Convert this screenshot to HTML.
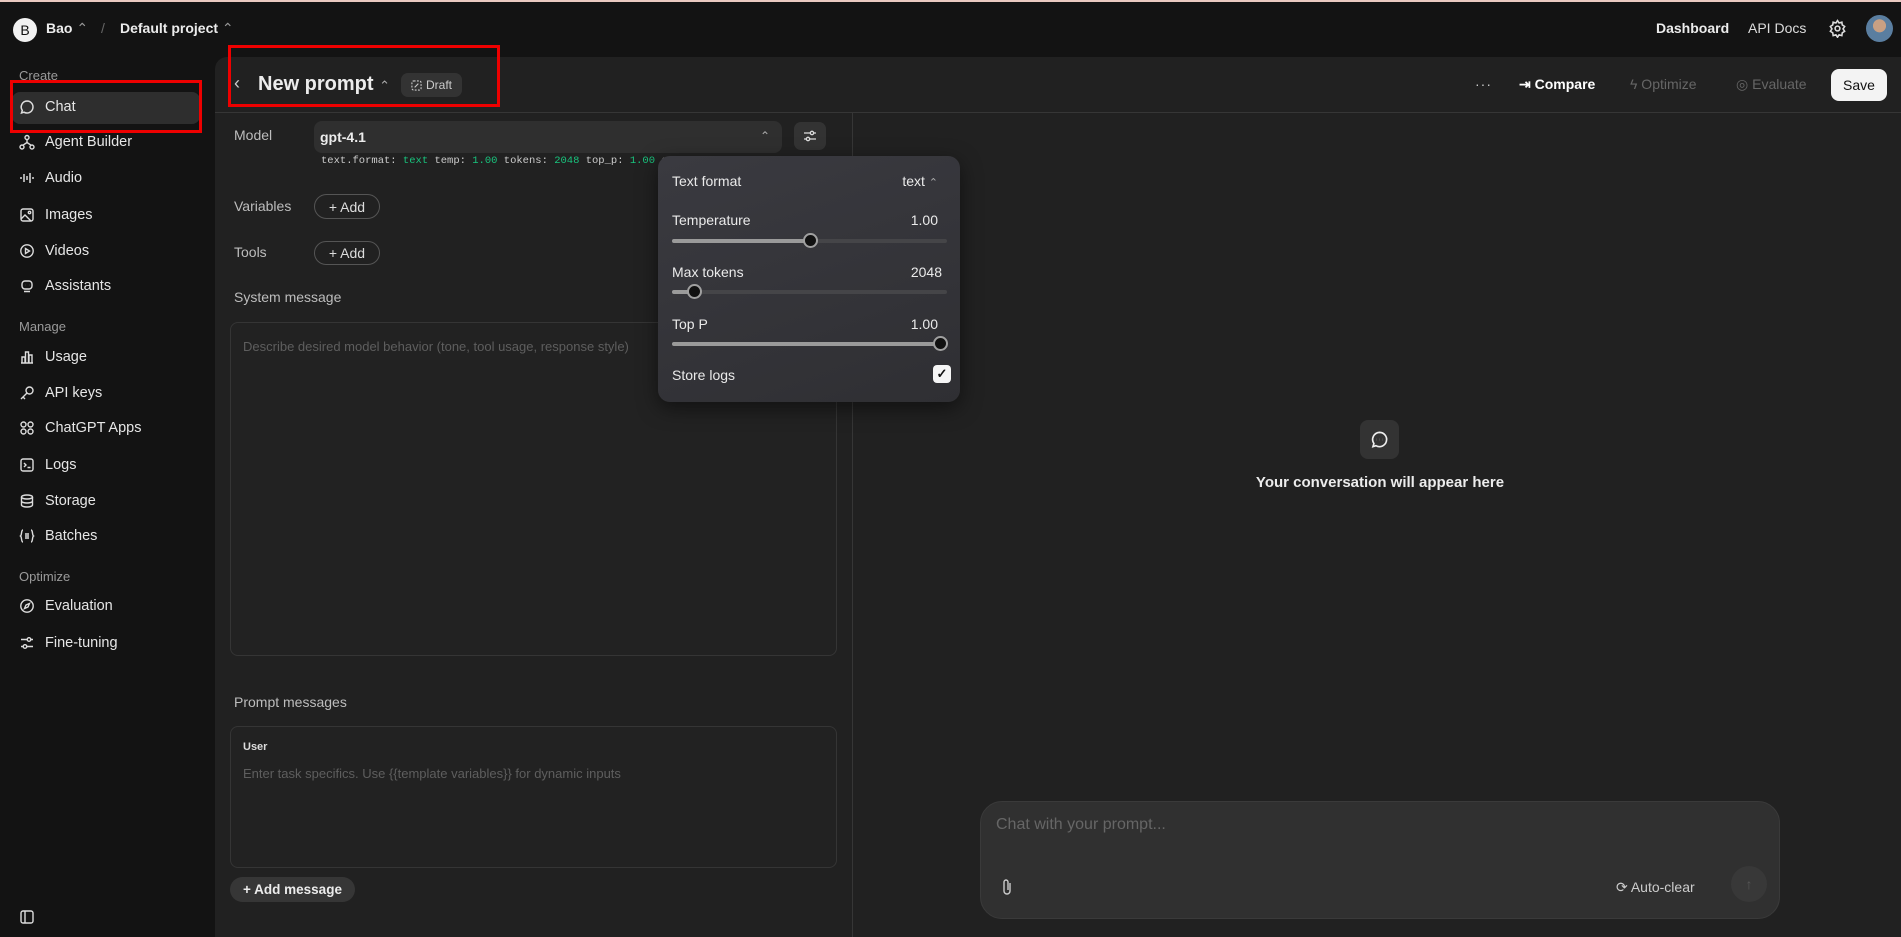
<!DOCTYPE html>
<html><head><meta charset="utf-8"><style>
*{box-sizing:border-box;margin:0;padding:0}
body{width:1901px;height:937px;overflow:hidden;background:#131313;font-family:"Liberation Sans",sans-serif;color:#ececec;position:relative;font-size:15px}
.a{position:absolute;white-space:nowrap}
.topline{left:0;top:0;width:1901px;height:2px;background:#e9c9c0}
.side .it{position:absolute;left:19px;display:flex;align-items:center;gap:10px;font-size:14.5px;color:#e6e6e6}
.side .sec{position:absolute;left:19px;font-size:13px;color:#9a9a9a}
.ic{width:16px;height:16px;display:inline-block}
.panel{left:215px;top:57px;width:1686px;height:880px;background:#212121;border-top-left-radius:12px}
.red{border:3px solid #ee0000}
.btn{border:1px solid #555;border-radius:14px;font-size:14px;color:#ddd;display:flex;align-items:center;justify-content:center;gap:6px}
.lbl{font-size:14px;color:#bdbdbd}
.pop{left:658px;top:156px;width:302px;height:246px;border-radius:12px;background:linear-gradient(160deg,#3a3a40,#2f2f33);box-shadow:0 6px 20px rgba(0,0,0,.5)}
.pop .t{position:absolute;font-size:14px;color:#eaeaea}
.trk{position:absolute;left:14px;width:275px;height:4px;background:#454548;border-radius:2px}
.fill{position:absolute;left:0;top:0;height:4px;background:#9a9a9a;border-radius:2px}
.knob{position:absolute;top:-6px;width:15px;height:15px;border-radius:50%;background:#111;border:2px solid #a0a0a0;margin-left:-7px}
</style></head><body>
<div class="a topline"></div>
<div class="a" style="left:13px;top:18px;width:24px;height:24px;border-radius:50%;background:#f2f2f2;color:#111;font-size:14px;display:flex;align-items:center;justify-content:center">B</div>
<div class="a" style="left:46px;top:20px;font-size:14px;font-weight:bold">Bao <span style="color:#999;font-weight:normal">⌃</span></div>
<div class="a" style="left:101px;top:20px;font-size:14px;color:#666">/</div>
<div class="a" style="left:120px;top:20px;font-size:14px;font-weight:bold">Default project <span style="color:#999;font-weight:normal">⌃</span></div>
<div class="a" style="left:1656px;top:20px;font-size:14px;font-weight:bold">Dashboard</div>
<div class="a" style="left:1748px;top:20px;font-size:14px;color:#ddd">API Docs</div>
<svg class="a" style="left:1828px;top:19px" width="19" height="19" viewBox="0 0 24 24" fill="none" stroke="#ddd" stroke-width="2"><circle cx="12" cy="12" r="3"/><path d="M12 2l2 3 3.5-1 .5 3.5 3 2-2 3 2 3-3 2-.5 3.5-3.5-1-2 3-2-3-3.5 1-.5-3.5-3-2 2-3-2-3 3-2 .5-3.5 3.5 1z"/></svg>
<div class="a" style="left:1866px;top:15px;width:27px;height:27px;border-radius:50%;background:radial-gradient(circle at 50% 40%,#c9a083 30%,#5a7ea0 32%)"></div>
<div class="side">
<div class="sec" style="top:68px">Create</div>
<div class="a" style="left:12px;top:92px;width:188px;height:32px;background:#2e2e2e;border-radius:8px"></div>
<div class="it" style="top:99px"><svg class="ic" viewBox="0 0 16 16" fill="none" stroke="#ddd" stroke-width="1.5"><path d="M8 2a6 6 0 1 1-3 11.2L2.5 14l.8-2.6A6 6 0 0 1 8 2z"/></svg>Chat</div>
<div class="it" style="top:134px"><svg class="ic" viewBox="0 0 16 16" fill="none" stroke="#ddd" stroke-width="1.4"><circle cx="8" cy="3.5" r="2"/><circle cx="3" cy="13" r="2"/><circle cx="13" cy="13" r="2"/><path d="M8 5.5v3M8 8.5L3.8 11.3M8 8.5l4.2 2.8"/></svg>Agent Builder</div>
<div class="it" style="top:170px"><svg class="ic" viewBox="0 0 16 16" stroke="#ddd" stroke-width="1.5"><path d="M2 7v2M5 4v8M8 6v4M11 3v10M14 7v2"/></svg>Audio</div>
<div class="it" style="top:207px"><svg class="ic" viewBox="0 0 16 16" fill="none" stroke="#ddd" stroke-width="1.4"><rect x="2" y="2" width="12" height="12" rx="2"/><circle cx="10.5" cy="5.5" r="1.2"/><path d="M2 12l4-4 6 6"/></svg>Images</div>
<div class="it" style="top:243px"><svg class="ic" viewBox="0 0 16 16" fill="none" stroke="#ddd" stroke-width="1.4"><circle cx="8" cy="8" r="6.2"/><path d="M6.5 5.5v5l4-2.5z"/></svg>Videos</div>
<div class="it" style="top:278px"><svg class="ic" viewBox="0 0 16 16" fill="none" stroke="#ddd" stroke-width="1.4"><rect x="3" y="3" width="10" height="8" rx="3"/><path d="M6 7h.1M10 7h.1M5 13.5h6"/></svg>Assistants</div>
<div class="sec" style="top:319px">Manage</div>
<div class="it" style="top:349px"><svg class="ic" viewBox="0 0 16 16" fill="none" stroke="#ddd" stroke-width="1.4"><path d="M2 14h12M3 14V8h3v6M6.5 14V3h3v11M10 14V6h3v8"/></svg>Usage</div>
<div class="it" style="top:385px"><svg class="ic" viewBox="0 0 16 16" fill="none" stroke="#ddd" stroke-width="1.4"><circle cx="10.5" cy="5.5" r="3.5"/><path d="M8 8l-6 6M4 12l2 2"/></svg>API keys</div>
<div class="it" style="top:420px"><svg class="ic" viewBox="0 0 16 16" fill="none" stroke="#ddd" stroke-width="1.4"><circle cx="4.5" cy="4.5" r="2.5"/><circle cx="11.5" cy="4.5" r="2.5"/><circle cx="4.5" cy="11.5" r="2.5"/><circle cx="11.5" cy="11.5" r="2.5"/></svg>ChatGPT Apps</div>
<div class="it" style="top:457px"><svg class="ic" viewBox="0 0 16 16" fill="none" stroke="#ddd" stroke-width="1.4"><rect x="2" y="2" width="12" height="12" rx="2"/><path d="M5 6l2 2-2 2M8.5 10.5h3"/></svg>Logs</div>
<div class="it" style="top:493px"><svg class="ic" viewBox="0 0 16 16" fill="none" stroke="#ddd" stroke-width="1.4"><ellipse cx="8" cy="4" rx="5.5" ry="2"/><path d="M2.5 4v8c0 1.1 2.5 2 5.5 2s5.5-.9 5.5-2V4M2.5 8c0 1.1 2.5 2 5.5 2s5.5-.9 5.5-2"/></svg>Storage</div>
<div class="it" style="top:528px"><svg class="ic" viewBox="0 0 16 16" fill="none" stroke="#ddd" stroke-width="1.4"><path d="M4 2C2 2 3 7 1.5 8 3 9 2 14 4 14M12 2c2 0 1 5 2.5 6-1.5 1-.5 6-2.5 6M6 6h4M6 8h4M6 10h4"/></svg>Batches</div>
<div class="sec" style="top:569px">Optimize</div>
<div class="it" style="top:598px"><svg class="ic" viewBox="0 0 16 16" fill="none" stroke="#ddd" stroke-width="1.4"><circle cx="8" cy="8" r="6.2"/><path d="M10.5 5.5L9 9 5.5 10.5 7 7z"/></svg>Evaluation</div>
<div class="it" style="top:635px"><svg class="ic" viewBox="0 0 16 16" fill="none" stroke="#ddd" stroke-width="1.4"><path d="M2 4.5h12M2 11.5h12"/><circle cx="10" cy="4.5" r="1.8" fill="#131313"/><circle cx="6" cy="11.5" r="1.8" fill="#131313"/></svg>Fine-tuning</div>
<svg class="a" style="left:19px;top:909px" width="16" height="16" viewBox="0 0 16 16" fill="none" stroke="#ddd" stroke-width="1.4"><rect x="2" y="2" width="12" height="12" rx="2"/><path d="M6 2v12"/></svg>
</div>
<div class="a red" style="left:10px;top:80px;width:192px;height:53px"></div>
<div class="a panel"></div>
<div class="a" style="left:215px;top:112px;width:1686px;height:1px;background:#363636"></div>
<div class="a" style="left:852px;top:113px;width:1px;height:824px;background:#363636"></div>
<div class="a" style="left:234px;top:73px;font-size:18px;color:#ccc">‹</div>
<div class="a" style="left:258px;top:73px;font-size:20px;font-weight:bold">New prompt <span style="font-size:13px;color:#aaa;font-weight:normal">⌃</span></div>
<div class="a" style="left:401px;top:73px;width:61px;height:24px;background:#333;border-radius:7px;font-size:12px;color:#ccc;display:flex;align-items:center;justify-content:center;gap:4px"><svg width="11" height="11" viewBox="0 0 12 12" fill="none" stroke="#ccc" stroke-width="1.2"><rect x="1" y="1" width="10" height="10" rx="2" stroke-dasharray="2 1.5"/><path d="M4 8l4-4"/></svg>Draft</div>
<div class="a red" style="left:228px;top:45px;width:272px;height:62px"></div>
<div class="a" style="left:1475px;top:76px;font-size:14px;color:#ccc;letter-spacing:1px">···</div>
<div class="a" style="left:1519px;top:76px;font-size:14px;font-weight:bold;color:#fff">⇥ Compare</div>
<div class="a" style="left:1630px;top:76px;font-size:14px;color:#666">ϟ Optimize</div>
<div class="a" style="left:1736px;top:76px;font-size:14px;color:#666">◎ Evaluate</div>
<div class="a" style="left:1831px;top:69px;width:56px;height:32px;background:#f3f3f3;color:#111;border-radius:8px;font-size:14px;display:flex;align-items:center;justify-content:center">Save</div>
<div class="a lbl" style="left:234px;top:127px">Model</div>
<div class="a" style="left:314px;top:121px;width:468px;height:32px;background:#2f2f2f;border-radius:8px;font-size:14px;font-weight:bold;padding:8px 6px">gpt-4.1<span style="position:absolute;right:12px;top:8px;color:#aaa;font-weight:normal;font-size:12px">⌃</span></div>
<div class="a" style="left:794px;top:122px;width:32px;height:28px;background:#333;border-radius:7px"><svg style="margin:7px 9px" width="14" height="14" viewBox="0 0 14 14" fill="none" stroke="#ddd" stroke-width="1.3"><path d="M1 4h12M1 10h12"/><circle cx="9" cy="4" r="1.7" fill="#333"/><circle cx="5" cy="10" r="1.7" fill="#333"/></svg></div>
<div class="a" style="left:321px;top:155px;font-family:'Liberation Mono',monospace;font-size:10.5px;color:#ccc">text.format: <span style="color:#19c37d">text</span> temp: <span style="color:#19c37d">1.00</span> tokens: <span style="color:#19c37d">2048</span> top_p: <span style="color:#19c37d">1.00</span> st</div>
<div class="a lbl" style="left:234px;top:198px">Variables</div>
<div class="a btn" style="left:314px;top:194px;width:66px;height:25px">+ Add</div>
<div class="a lbl" style="left:234px;top:244px">Tools</div>
<div class="a btn" style="left:314px;top:241px;width:66px;height:24px">+ Add</div>
<div class="a lbl" style="left:234px;top:289px">System message</div>
<div class="a" style="left:230px;top:322px;width:607px;height:334px;border:1px solid #353535;border-radius:8px;background:#222"></div>
<div class="a" style="left:243px;top:339px;font-size:13px;color:#5e5e5e">Describe desired model behavior (tone, tool usage, response style)</div>
<div class="a lbl" style="left:234px;top:694px">Prompt messages</div>
<div class="a" style="left:230px;top:726px;width:607px;height:142px;border:1px solid #353535;border-radius:8px;background:#222"></div>
<div class="a" style="left:243px;top:741px;font-size:11px;font-weight:bold;color:#ddd">User</div>
<div class="a" style="left:243px;top:766px;font-size:13px;color:#5e5e5e">Enter task specifics. Use {{template variables}} for dynamic inputs</div>
<div class="a" style="left:230px;top:877px;width:125px;height:25px;background:#363636;border-radius:13px;font-size:13.5px;font-weight:bold;display:flex;align-items:center;justify-content:center">+ Add message</div>
<div class="a pop">
<div class="t" style="left:14px;top:17px">Text format</div>
<div class="t" style="right:22px;top:17px">text <span style="color:#aaa;font-size:11px">⌃</span></div>
<div class="t" style="left:14px;top:56px">Temperature</div><div class="t" style="right:22px;top:56px">1.00</div>
<div class="trk" style="top:83px"><div class="fill" style="width:138px"></div><div class="knob" style="left:138px"></div></div>
<div class="t" style="left:14px;top:108px">Max tokens</div><div class="t" style="right:18px;top:108px">2048</div>
<div class="trk" style="top:134px"><div class="fill" style="width:22px"></div><div class="knob" style="left:22px"></div></div>
<div class="t" style="left:14px;top:160px">Top P</div><div class="t" style="right:22px;top:160px">1.00</div>
<div class="trk" style="top:186px"><div class="fill" style="width:268px"></div><div class="knob" style="left:268px"></div></div>
<div class="t" style="left:14px;top:211px">Store logs</div>
<div class="a" style="left:275px;top:209px;width:18px;height:18px;background:#f5f5f5;border-radius:4px;color:#111;font-size:13px;font-weight:bold;text-align:center;line-height:18px">✓</div>
</div>
<div class="a" style="left:1360px;top:420px;width:39px;height:39px;background:#333;border-radius:8px"><svg style="margin:10px" width="19" height="19" viewBox="0 0 16 16" fill="none" stroke="#eee" stroke-width="1.4"><path d="M8 2a6 6 0 1 1-3 11.2L2.5 14l.8-2.6A6 6 0 0 1 8 2z"/><path d="M5.5 8h.1M8 8h.1M10.5 8h.1" stroke-width="2"/></svg></div>
<div class="a" style="left:1255px;top:474px;width:250px;text-align:center;font-size:15px;font-weight:bold">Your conversation will appear here</div>
<div class="a" style="left:980px;top:801px;width:800px;height:118px;background:#303030;border:1px solid #3a3a3a;border-radius:22px"></div>
<div class="a" style="left:996px;top:816px;font-size:16px;color:#666">Chat with your prompt...</div>
<svg class="a" style="left:1000px;top:878px" width="14" height="18" viewBox="0 0 14 18" fill="none" stroke="#ccc" stroke-width="1.4"><path d="M10 5v8a3 3 0 0 1-6 0V4a2 2 0 0 1 4 0v8"/></svg>
<div class="a" style="left:1616px;top:879px;font-size:14px;color:#ccc">⟳ Auto-clear</div>
<div class="a" style="left:1731px;top:866px;width:36px;height:36px;border-radius:50%;background:#383838;color:#555;text-align:center;line-height:36px;font-size:14px">↑</div>
</body></html>
